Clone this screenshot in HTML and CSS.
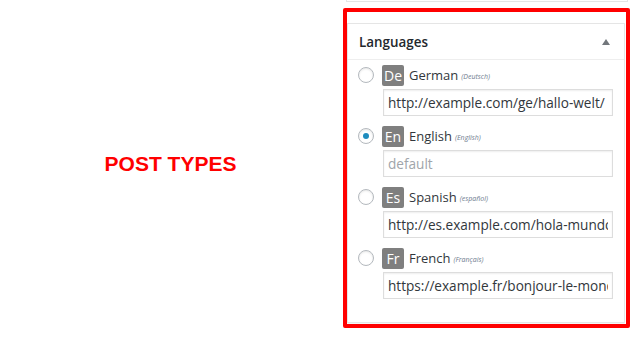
FILE: index.html
```html
<!DOCTYPE html>
<html lang="en">
<head>
  <meta charset="UTF-8" />
  <meta name="viewport" content="width=device-width, initial-scale=1.0"/>
  <title>Languages</title>
  <link rel="stylesheet" href="styles.css">
</head>
<body>
<div class="page">
  <div class="intro">
    <span class="callout">POST TYPES</span>
  </div>

  <div class="sidebar">
    <div class="prev-box"></div>
    <div class="highlight">
      <div class="postbox">
        <div class="postbox-header">
          <h2>Languages</h2>
          <span class="toggle"></span>
        </div>
        <div class="inside">
          <div class="lang">
            <div class="lang-line">
              <span class="radio"></span>
              <span class="flag">De</span>
              <span class="name">German</span>
              <span class="native">(Deutsch)</span>
            </div>
            <input class="url" type="text" value="http://example.com/ge/hallo-welt/">
          </div>
          <div class="lang">
            <div class="lang-line">
              <span class="radio checked"></span>
              <span class="flag">En</span>
              <span class="name">English</span>
              <span class="native">(English)</span>
            </div>
            <input class="url" type="text" placeholder="default">
          </div>
          <div class="lang">
            <div class="lang-line">
              <span class="radio"></span>
              <span class="flag">Es</span>
              <span class="name">Spanish</span>
              <span class="native">(español)</span>
            </div>
            <input class="url" type="text" value="http://es.example.com/hola-mundo/">
          </div>
          <div class="lang">
            <div class="lang-line">
              <span class="radio"></span>
              <span class="flag">Fr</span>
              <span class="name">French</span>
              <span class="native">(Français)</span>
            </div>
            <input class="url" type="text" value="https://example.fr/bonjour-le-monde/">
          </div>
        </div>
      </div>
    </div>
  </div>
</div>
</body>
</html>
```

FILE: styles.css
```css
body {
  margin: 0;
  background-color: #fff;
  font-family: "Open Sans", "Noto Sans", sans-serif;
  color: #32373c;
}

.page {
  display: flex;
  width: 633px;
  height: 339px;
}

.intro {
  width: 341px;
  display: flex;
  align-items: center;
  justify-content: center;
  padding-bottom: 11px;
  box-sizing: border-box;
}

.callout {
  font-family: "Liberation Sans", Arial, sans-serif;
  font-weight: bold;
  font-size: 21px;
  color: #ff0000;
}

.sidebar {
  margin-left: 2px;
  width: 287px;
}

.prev-box {
  height: 1px;
  margin: 0 2px 0 3px;
  border: 1px solid #e5e5e5;
  border-top: none;
}

.highlight {
  margin-top: 6px;
  border: 4px solid #ff0000;
  border-radius: 2px;
  padding: 11px 1px 1px 0;
}

.postbox {
  border: 1px solid #e5e5e5;
  box-shadow: 0 1px 1px rgba(0, 0, 0, 0.04);
  height: 300px;
  box-sizing: border-box;
}

.postbox-header {
  display: flex;
  align-items: center;
  justify-content: space-between;
  height: 35px;
  padding: 0 14px 0 11px;
  border-bottom: 1px solid #eee;
}

h2 {
  margin: 0;
  font-size: 13.4px;
  font-weight: 600;
  color: #23282d;
}

.toggle {
  width: 0;
  height: 0;
  border-left: 4px solid transparent;
  border-right: 4px solid transparent;
  border-bottom: 6px solid #72777c;
}

.inside {
  padding: 4px 0 0 10px;
}

.lang {
  height: 61px;
}

.lang-line {
  display: flex;
  align-items: center;
  height: 22px;
}

.radio {
  width: 16px;
  height: 16px;
  box-sizing: border-box;
  border: 1px solid #b4b9be;
  border-radius: 50%;
  box-shadow: inset 0 1px 2px rgba(0, 0, 0, 0.1);
  margin-right: 8px;
  display: flex;
  align-items: center;
  justify-content: center;
}

.radio.checked::after {
  content: "";
  width: 6px;
  height: 6px;
  border-radius: 50%;
  background-color: #1e8cbe;
}

.flag {
  width: 22px;
  height: 21px;
  border-radius: 2px;
  background-color: #7f7f7f;
  color: #fff;
  font-size: 14px;
  line-height: 21px;
  text-align: center;
  margin-right: 5px;
}

.name {
  font-size: 13px;
  color: #32373c;
  margin-right: 3px;
}

.native {
  font-size: 7px;
  font-style: italic;
  color: #6f7d8f;
  margin-top: 3px;
}

.url {
  display: block;
  margin: 3px 0 0 25px;
  width: 230px;
  height: 27px;
  box-sizing: border-box;
  padding: 0 4px;
  border: 1px solid #ddd;
  box-shadow: inset 0 1px 2px rgba(0, 0, 0, 0.07);
  font-family: "Open Sans", "Noto Sans", sans-serif;
  font-size: 13.6px;
  color: #32373c;
  background-color: #fff;
  outline: none;
}

.url::placeholder {
  color: #a0a5aa;
}
```
